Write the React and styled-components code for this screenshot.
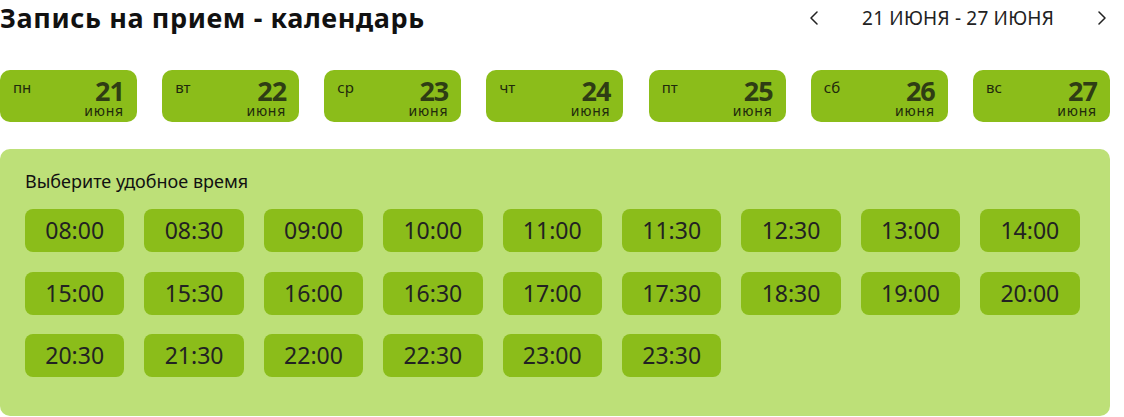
import React from "react";
import styled, { createGlobalStyle } from "styled-components";

const GlobalStyle = createGlobalStyle`
  body {
    margin: 0;
    background: #ffffff;
    font-family: "Noto Sans", "Lato", sans-serif;
    color: #111;
  }
`;

const Page = styled.div`
  width: 1110px;
`;

const Header = styled.div`
  display: flex;
  justify-content: space-between;
  align-items: center;
  height: 36px;
`;

const Title = styled.h1`
  margin: 0;
  font-size: 27px;
  font-weight: 700;
  line-height: 36px;
  letter-spacing: 0.6px;
  color: #111;
`;

const WeekNav = styled.div`
  display: flex;
  align-items: center;
  gap: 44px;
  margin-right: 4px;
  font-size: 19px;
  letter-spacing: 0.2px;
  color: #222;
`;

const NavButton = styled.button`
  display: flex;
  align-items: center;
  justify-content: center;
  width: 8px;
  height: 16px;
  padding: 0;
  border: none;
  background: none;
  cursor: pointer;
`;

const DaysRow = styled.div`
  display: flex;
  justify-content: space-between;
  margin-top: 34px;
`;

const DayCard = styled.div`
  width: 137px;
  height: 52px;
  box-sizing: border-box;
  border-radius: 10px;
  background: #8bbd1a;
  padding: 8px 13px 0 13px;
  display: flex;
  justify-content: space-between;
`;

const WeekDay = styled.span`
  font-size: 15px;
  line-height: 18px;
  color: #1f2a0c;
`;

const DateBlock = styled.div`
  display: flex;
  flex-direction: column;
  align-items: flex-end;
`;

const DayNumber = styled.span`
  font-size: 27px;
  font-weight: 700;
  line-height: 26px;
  letter-spacing: -1px;
  color: #2f3d14;
`;

const Month = styled.span`
  font-size: 14px;
  line-height: 14px;
  letter-spacing: 0.8px;
  color: #1f2a0c;
`;

const Panel = styled.div`
  margin-top: 27px;
  height: 267px;
  box-sizing: border-box;
  border-radius: 10px;
  background: #bde078;
  padding: 20px 25px 0 25px;
`;

const PanelTitle = styled.div`
  font-size: 18px;
  line-height: 24px;
  color: #111;
`;

const SlotGrid = styled.div`
  display: grid;
  grid-template-columns: repeat(9, 99.4px);
  column-gap: 20px;
  row-gap: 19.5px;
  margin-top: 16px;
`;

const Slot = styled.button`
  height: 43px;
  border: none;
  border-radius: 8px;
  background: #8bbd1a;
  font-family: "Noto Sans", "Lato", sans-serif;
  font-size: 23px;
  line-height: 43px;
  color: #222;
  padding: 0;
  cursor: pointer;
`;

const days = [
  { name: "пн", num: 21 },
  { name: "вт", num: 22 },
  { name: "ср", num: 23 },
  { name: "чт", num: 24 },
  { name: "пт", num: 25 },
  { name: "сб", num: 26 },
  { name: "вс", num: 27 },
];

const times = [
  "08:00", "08:30", "09:00", "10:00", "11:00", "11:30", "12:30", "13:00", "14:00",
  "15:00", "15:30", "16:00", "16:30", "17:00", "17:30", "18:30", "19:00", "20:00",
  "20:30", "21:30", "22:00", "22:30", "23:00", "23:30",
];

const Chevron = ({ dir }) => (
  <svg width="8" height="14" viewBox="0 0 8 14" fill="none">
    <path
      d={dir === "left" ? "M7 1 L1 7 L7 13" : "M1 1 L7 7 L1 13"}
      stroke="#222"
      strokeWidth="1.5"
      strokeLinecap="round"
      strokeLinejoin="round"
    />
  </svg>
);

const App = () => (
  <Page>
    <GlobalStyle />
    <Header>
      <Title>Запись на прием - календарь</Title>
      <WeekNav>
        <NavButton>
          <Chevron dir="left" />
        </NavButton>
        <span>21 ИЮНЯ - 27 ИЮНЯ</span>
        <NavButton>
          <Chevron dir="right" />
        </NavButton>
      </WeekNav>
    </Header>

    <DaysRow>
      {days.map(d => (
        <DayCard key={d.num}>
          <WeekDay>{d.name}</WeekDay>
          <DateBlock>
            <DayNumber>{d.num}</DayNumber>
            <Month>июня</Month>
          </DateBlock>
        </DayCard>
      ))}
    </DaysRow>

    <Panel>
      <PanelTitle>Выберите удобное время</PanelTitle>
      <SlotGrid>
        {times.map(t => (
          <Slot key={t}>{t}</Slot>
        ))}
      </SlotGrid>
    </Panel>
  </Page>
);

export default App;
